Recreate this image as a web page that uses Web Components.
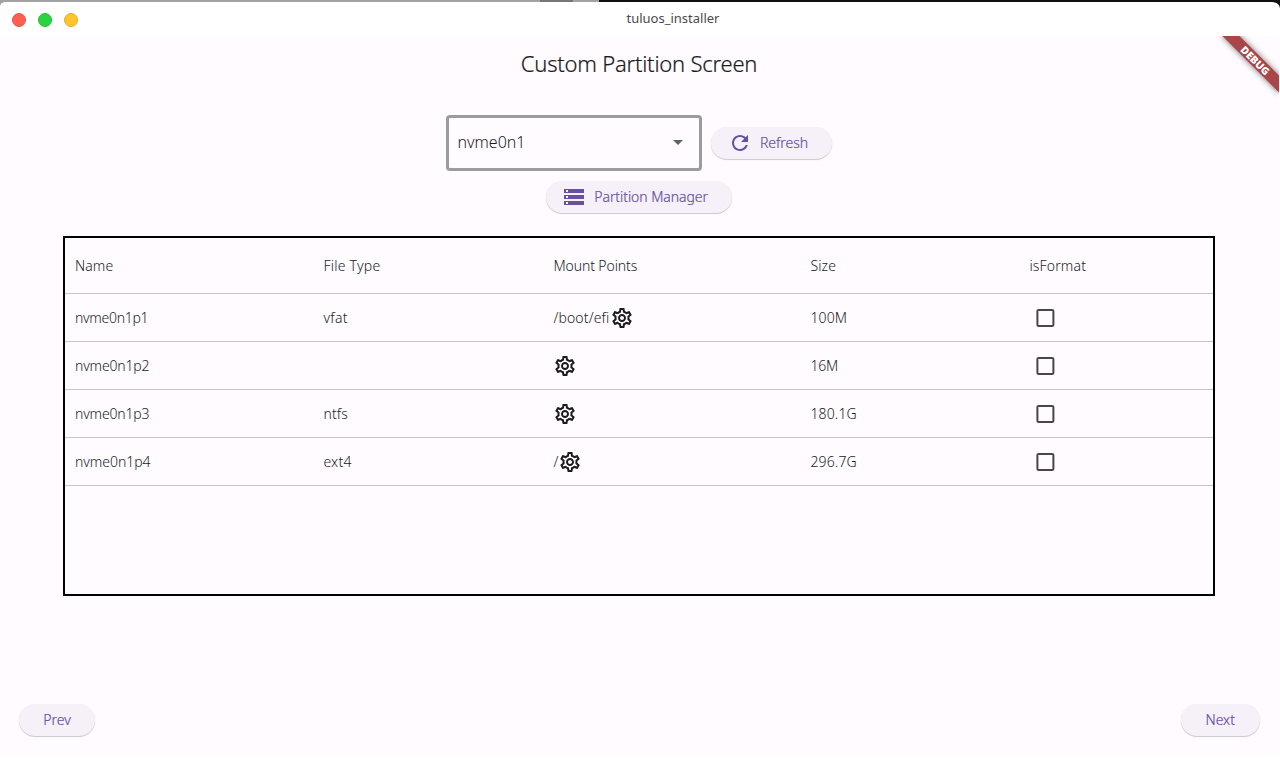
<!DOCTYPE html>
<html lang="en">
<head>
<meta charset="utf-8">
<title>tuluos_installer</title>
<style>
html,body{margin:0;height:100%;overflow:hidden;background:#fff}
body{font-family:"Noto Sans","Open Sans",sans-serif;font-weight:300;color:#1c1b1f}
</style>
</head>
<body>
<installer-window></installer-window>
<script>
const define = (name, html) => customElements.define(name, class extends HTMLElement {
  constructor() {
    super();
    this.attachShadow({mode: 'open'}).innerHTML = html;
  }
});

define('title-bar', `
<style>
:host{display:block;height:36px;background:linear-gradient(90deg,#a3a1a3 0 540px,#777 540px 573px,#a3a1a3 573px 599px,#111 599px);flex:none}
.bar{box-sizing:border-box;height:36px;border-top:2px solid transparent;background:#fff padding-box;border-radius:6px 8px 0 0;display:grid;grid-template-columns:100px 1fr 34px;align-items:center}
.lights{display:flex;gap:12px;padding:2px 0 0 12px}
i{width:14px;height:14px;box-sizing:border-box;border-radius:50%;background:var(--c);border:1px solid var(--e)}
.t{text-align:center;font-size:13px;font-weight:400;line-height:18px;color:#4a4a4a;padding-bottom:2px}
</style>
<div class="bar"><div class="lights"><i style="--c:#ff5f52;--e:#e5544a"></i><i style="--c:#29d440;--e:#20bd36"></i><i style="--c:#ffc52c;--e:#e4ae28"></i></div><div class="t"><slot></slot></div></div>`);

define('debug-ribbon', `
<style>
:host{position:absolute;right:0;top:0;width:80px;height:80px;overflow:hidden;pointer-events:none}
div{position:absolute;left:40px;top:28px;width:80px;height:12px;transform-origin:40px -28px;transform:rotate(45deg);background:#a94648;box-shadow:0 0 6px rgba(0,0,0,.55);color:#fff;font-size:10.4px;font-weight:900;line-height:12px;text-align:center;text-indent:1px}
</style><div><slot></slot></div>`);

define('pill-button', `
<style>
:host{box-sizing:border-box;height:32px;display:flex;align-items:center;justify-content:center;gap:8px;border-radius:16px;background:#f6f1f9;color:#6750a4;font-size:14px;font-weight:300;line-height:20px;box-shadow:0 1px 1px rgba(0,0,0,.2),0 0 1px rgba(0,0,0,.06);white-space:nowrap}
:host([icon]){justify-content:flex-start;padding-left:16px}
span{-webkit-text-stroke:.2px currentColor}
::slotted(svg){display:block;fill:currentColor;flex:none}
</style><slot name="icon"></slot><span><slot></slot></span>`);

define('drop-down', `
<style>
:host{box-sizing:border-box;width:256px;height:56px;border:3px solid #9c9c9d;border-radius:4px;display:flex;align-items:center;justify-content:space-between;padding:0 9px 2px;font-size:16px;line-height:24px}
svg{display:block;fill:#616063}
</style><span><slot></slot></span><svg width="24" height="24" viewBox="0 0 24 24"><path d="M7 10l5 5 5-5z"/></svg>`);

define('gear-icon', `
<style>:host{display:block;width:24px;height:24px}svg{display:block;fill:#1c1b1f}</style>
<svg width="24" height="24" viewBox="0 0 24 24"><path d="M19.43 12.98c.04-.32.07-.64.07-.98s-.03-.66-.07-.98l2.11-1.65c.19-.15.24-.42.12-.64l-2-3.46c-.09-.16-.26-.25-.44-.25-.06 0-.12.01-.17.03l-2.49 1c-.52-.4-1.08-.73-1.69-.98l-.38-2.65C14.46 2.18 14.25 2 14 2h-4c-.25 0-.46.18-.49.42l-.38 2.65c-.61.25-1.17.59-1.69.98l-2.49-1c-.06-.02-.12-.03-.18-.03-.17 0-.34.09-.43.25l-2 3.46c-.13.22-.07.49.12.64l2.11 1.65c-.04.32-.07.65-.07.98s.03.66.07.98l-2.11 1.65c-.19.15-.24.42-.12.64l2 3.46c.09.16.26.25.44.25.06 0 .12-.01.17-.03l2.49-1c.52.4 1.08.73 1.69.98l.38 2.65c.03.24.24.42.49.42h4c.25 0 .46-.18.49-.42l.38-2.65c.61-.25 1.17-.59 1.69-.98l2.49 1c.06.02.12.03.18.03.17 0 .34-.09.43-.25l2-3.46c.12-.22.07-.49-.12-.64l-2.11-1.65zm-1.98-1.71c.04.31.05.52.05.73 0 .21-.02.43-.05.73l-.14 1.13.89.7 1.08.84-.7 1.21-1.27-.51-1.04-.42-.9.68c-.43.32-.84.56-1.25.73l-1.06.43-.16 1.13-.2 1.35h-1.4l-.19-1.35-.16-1.13-1.06-.43c-.43-.18-.83-.41-1.23-.71l-.91-.7-1.06.43-1.27.51-.7-1.21 1.08-.84.89-.7-.14-1.13c-.03-.31-.05-.54-.05-.74s.02-.43.05-.73l.14-1.13-.89-.7-1.08-.84.7-1.21 1.27.51 1.04.42.9-.68c.43-.32.84-.56 1.25-.73l1.06-.43.16-1.13.2-1.35h1.39l.19 1.35.16 1.13 1.06.43c.43.18.83.41 1.23.71l.91.7 1.06-.43 1.27-.51.7 1.21-1.07.85-.89.7.14 1.13zM12 8c-2.21 0-4 1.79-4 4s1.79 4 4 4 4-1.79 4-4-1.79-4-4-4zm0 6c-1.1 0-2-.9-2-2s.9-2 2-2 2 .9 2 2-.9 2-2 2z"/></svg>`);

define('check-box', `
<style>:host{display:block;margin-left:6px}svg{display:block}</style>
<svg width="20" height="18"><rect x="2.4" y="1" width="16" height="16" rx="1.2" fill="none" stroke="#49454f" stroke-width="2"/></svg>`);

define('table-row', `
<style>
:host{box-sizing:border-box;height:48px;border-bottom:1px solid #c8c3cc;display:grid;grid-template-columns:248.4px 230px 257px 219px 1fr;align-items:center;padding:1px 0 0 10px;font-size:14px;line-height:20px;letter-spacing:.15px;white-space:nowrap}
:host([head]){height:56px}
::slotted(*){display:flex;align-items:center}
::slotted(:first-child){letter-spacing:-.18px}
:host([head]) ::slotted(:first-child){letter-spacing:.05px}
:host([head]) ::slotted(:nth-child(2)){letter-spacing:.25px}
:host([head]) ::slotted(:nth-child(3)){letter-spacing:-.1px}
</style><slot></slot>`);

define('partition-table', `
<style>:host{box-sizing:border-box;display:block;width:1152px;height:360px;border:2px solid #000}</style>
<table-row head><span>Name</span><span>File Type</span><span>Mount Points</span><span>Size</span><span>isFormat</span></table-row>
<table-row><span style="letter-spacing:-.3px">nvme0n1p1</span><span style="letter-spacing:.3px">vfat</span><span>/boot/efi<gear-icon style="margin-left:.5px"></gear-icon></span><span>100M</span><span><check-box></check-box></span></table-row>
<table-row><span>nvme0n1p2</span><span></span><span><gear-icon></gear-icon></span><span style="letter-spacing:-.2px">16M</span><span><check-box></check-box></span></table-row>
<table-row><span>nvme0n1p3</span><span>ntfs</span><span><gear-icon></gear-icon></span><span>180.1G</span><span><check-box></check-box></span></table-row>
<table-row><span style="letter-spacing:-.05px">nvme0n1p4</span><span style="letter-spacing:.25px">ext4</span><span>/<gear-icon style="margin-left:-.4px"></gear-icon></span><span>296.7G</span><span><check-box></check-box></span></table-row>`);

define('installer-window', `
<style>
:host{display:flex;flex-direction:column;height:759px}
main{position:relative;width:1280px;height:720px;margin-left:-1px;background:#fffbff;display:flex;flex-direction:column;align-items:center}
h1{margin:11px 0 0;font-size:22px;font-weight:300;line-height:32px;letter-spacing:-.22px;-webkit-text-stroke:.2px currentColor}
.pick{display:flex;align-items:center;gap:9.6px;margin-top:36px}
.pick{position:relative}
.refresh{width:121.4px;padding-left:16.8px}
.manager{width:185.4px;margin-top:10px;letter-spacing:-.07px}
partition-table{margin-top:23px}
footer{align-self:stretch;display:flex;justify-content:space-between;margin-top:108px;padding:0 19.5px 0 19.7px}
</style>
<title-bar>tuluos_installer</title-bar>
<main>
<h1>Custom Partition Screen</h1>
<div class="pick"><drop-down>nvme0n1</drop-down>
<pill-button icon class="refresh"><svg slot="icon" width="24" height="24" viewBox="0 0 24 24"><path d="M17.65 6.35C16.2 4.9 14.21 4 12 4c-4.42 0-7.99 3.58-7.99 8s3.57 8 7.99 8c3.73 0 6.84-2.55 7.73-6h-2.08c-.82 2.33-3.04 4-5.65 4-3.31 0-6-2.69-6-6s2.69-6 6-6c1.66 0 3.14.69 4.22 1.78L13 11h7V4l-2.35 2.35z"/></svg>Refresh</pill-button></div>
<pill-button icon class="manager"><svg slot="icon" width="24" height="24" viewBox="0 0 24 24"><path d="M2 20h20v-4H2v4zm2-3h2v2H4v-2zM2 4v4h20V4H2zm4 3H4V5h2v2zm-4 7h20v-4H2v4zm2-3h2v2H4v-2z"/></svg>Partition Manager</pill-button>
<partition-table></partition-table>
<footer><pill-button style="width:76.6px">Prev</pill-button><pill-button style="width:78.6px">Next</pill-button></footer>
<debug-ribbon>DEBUG</debug-ribbon>
</main>`);
</script>
</body>
</html>
